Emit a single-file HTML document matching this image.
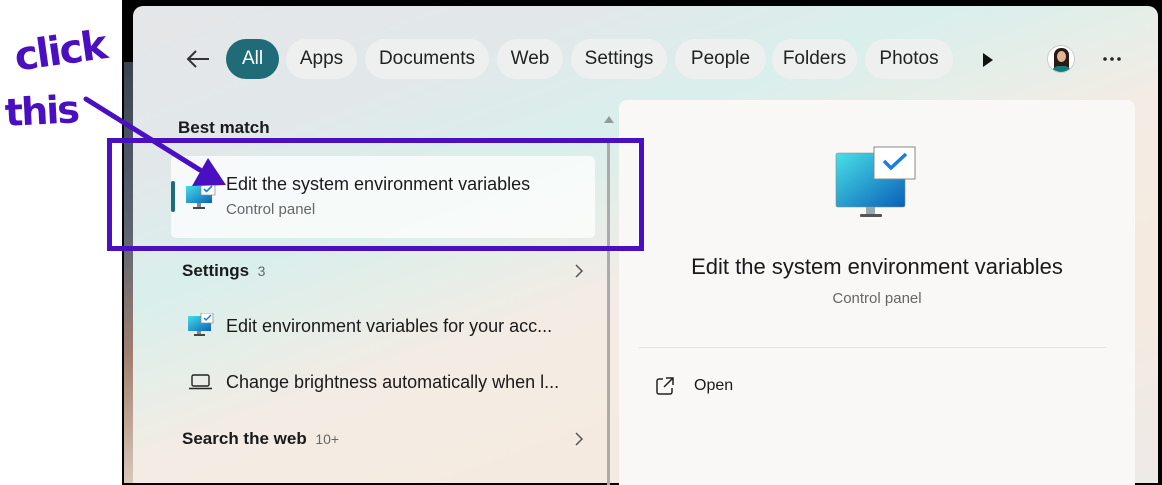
<!DOCTYPE html>
<html><head><meta charset="utf-8">
<style>
*{margin:0;padding:0;box-sizing:border-box}
body{width:1162px;height:485px;background:#fff;position:relative;overflow:hidden;font-family:"Liberation Sans",sans-serif;color:#1a1a1a}
.frame{position:absolute;left:122px;top:0;width:1040px;height:485px;background:#000}
.photo{position:absolute;left:124px;top:62px;width:12px;height:421px;background:linear-gradient(180deg,#3a4450 0%,#5b6470 40%,#a08070 70%,#d8c8b8 100%)}
.win{position:absolute;left:133px;top:6px;width:1025px;height:477px;border-radius:10px 10px 0 0;
background:linear-gradient(160deg,#e4e6e8 0%,#e2e8ea 20%,#d9efec 35%,#f4ece4 55%,#f5eadf 75%,#eeeae8 100%)}
.pill{position:absolute;top:39px;height:40px;border-radius:20px;background:#eef0f0;font-size:19px;line-height:40px;text-align:center;color:#222}
.all{background:#1f6b77;color:#fff}
.rp{position:absolute;left:619px;top:100px;width:516px;height:385px;background:#f9f8f7;border-radius:8px 8px 0 0}
.t{position:absolute;white-space:nowrap}
.hw{position:absolute;color:#4a0fc0;font-weight:bold;font-family:"DejaVu Sans",sans-serif;letter-spacing:-2px;line-height:1}
</style></head><body>
<div class="frame"></div>
<div class="photo"></div>
<div class="win"></div>

<svg style="position:absolute;left:185px;top:48px" width="26" height="22"><path d="M24 11H3M11 3L3 11L11 19" stroke="#333" stroke-width="2" fill="none"/></svg>
<div class="pill all" style="left:226px;width:53px">All</div>
<div class="pill" style="left:286px;width:71px">Apps</div>
<div class="pill" style="left:365px;width:124px">Documents</div>
<div class="pill" style="left:497px;width:66px">Web</div>
<div class="pill" style="left:571px;width:96px">Settings</div>
<div class="pill" style="left:675px;width:91px">People</div>
<div class="pill" style="left:772px;width:85px">Folders</div>
<div class="pill" style="left:865px;width:88px">Photos</div>
<svg style="position:absolute;left:982px;top:52px" width="12" height="16"><path d="M1 1L11 8L1 15Z" fill="#111"/></svg>
<div style="position:absolute;left:1047px;top:45px;width:28px;height:28px;border-radius:50%;background:#fff;border:1px solid #ccc;overflow:hidden">
<div style="position:absolute;left:6px;top:2px;width:15px;height:22px;border-radius:7px 7px 2px 2px;background:#2a1a12"></div>
<div style="position:absolute;left:9px;top:5px;width:9px;height:11px;border-radius:50%;background:#e2b598"></div>
<div style="position:absolute;left:3px;top:20px;width:21px;height:10px;border-radius:8px 8px 0 0;background:#147a80"></div></div>
<svg style="position:absolute;left:1102px;top:56px" width="20" height="6"><circle cx="3" cy="3" r="1.8" fill="#222"/><circle cx="10" cy="3" r="1.8" fill="#222"/><circle cx="17" cy="3" r="1.8" fill="#222"/></svg>

<div class="t" style="left:178px;top:118px;font-size:17px;font-weight:bold;color:#1a1a1a">Best match</div>
<div style="position:absolute;left:171px;top:156px;width:424px;height:82px;background:rgba(255,255,255,.75);border-radius:5px"></div>
<div style="position:absolute;left:171px;top:181px;width:4px;height:31px;background:#1f6b77;border-radius:2px"></div>
<svg style="position:absolute;left:185px;top:183px" width="32" height="28"><defs><linearGradient id="g1" x1="0" y1="0" x2="1" y2="1"><stop offset="0" stop-color="#45dde8"/><stop offset="1" stop-color="#0a63b8"/></linearGradient></defs>
<rect x="1" y="3" width="26" height="17" fill="url(#g1)"/><rect x="16" y="0" width="14" height="12" fill="#fff" stroke="#888" stroke-width=".7"/><path d="M19 6l2.5 2.5L27 3" stroke="#1a7de0" stroke-width="1.6" fill="none"/><rect x="12" y="20" width="4" height="4" fill="#888"/><rect x="8" y="24" width="12" height="2" fill="#444"/></svg>
<div class="t" style="left:226px;top:174px;font-size:18px">Edit the system environment variables</div>
<div class="t" style="left:226px;top:201px;font-size:15px;color:#666">Control panel</div>

<div class="t" style="left:182px;top:261px;font-size:17px;font-weight:bold">Settings <span style="font-weight:normal;color:#666;font-size:14px">&nbsp;3</span></div>
<svg style="position:absolute;left:574px;top:264px" width="10" height="14"><path d="M2 1l6 6-6 6" stroke="#555" stroke-width="1.5" fill="none"/></svg>
<svg style="position:absolute;left:187px;top:313px" width="28" height="24"><defs><linearGradient id="g2" x1="0" y1="0" x2="1" y2="1"><stop offset="0" stop-color="#45dde8"/><stop offset="1" stop-color="#0a63b8"/></linearGradient></defs>
<rect x="1" y="3" width="23" height="15" fill="url(#g2)"/><rect x="14" y="0" width="12" height="10" fill="#fff" stroke="#888" stroke-width=".7"/><path d="M17 5l2 2 5-5" stroke="#1a7de0" stroke-width="1.4" fill="none"/><rect x="10" y="18" width="4" height="3" fill="#888"/><rect x="7" y="21" width="11" height="2" fill="#444"/></svg>
<div class="t" style="left:226px;top:316px;font-size:18px">Edit environment variables for your acc...</div>
<svg style="position:absolute;left:189px;top:374px" width="24" height="16"><rect x="3" y="1" width="17" height="11" rx="1.5" stroke="#222" stroke-width="1.4" fill="none"/><path d="M0 14.5h23" stroke="#222" stroke-width="1.6"/></svg>
<div class="t" style="left:226px;top:372px;font-size:18px">Change brightness automatically when l...</div>
<div class="t" style="left:182px;top:429px;font-size:17px;font-weight:bold">Search the web <span style="font-weight:normal;color:#666;font-size:14px">&nbsp;10+</span></div>
<svg style="position:absolute;left:574px;top:432px" width="10" height="14"><path d="M2 1l6 6-6 6" stroke="#555" stroke-width="1.5" fill="none"/></svg>

<svg style="position:absolute;left:603px;top:114px" width="12" height="10"><path d="M1 9L6 2L11 9Z" fill="#999"/></svg>
<div style="position:absolute;left:607px;top:140px;width:3px;height:345px;background:#aaa"></div>

<div class="rp"></div>
<svg style="position:absolute;left:835px;top:146px" width="82" height="74"><defs><linearGradient id="g3" x1="0" y1="0" x2="1" y2="1"><stop offset="0" stop-color="#48e0e8"/><stop offset="1" stop-color="#0a5fb8"/></linearGradient></defs>
<rect x="1" y="7" width="69" height="54" rx="2" fill="url(#g3)" stroke="#888" stroke-width=".6"/><rect x="39" y="1" width="41" height="32" fill="#fff" stroke="#888" stroke-width="1"/><path d="M49 15l7 7 15-14" stroke="#1a7de0" stroke-width="3.5" fill="none"/><rect x="31" y="61" width="9" height="7" fill="#9aa"/><rect x="25" y="68" width="22" height="3" rx="1" fill="#555"/></svg>
<div class="t" style="left:619px;width:516px;text-align:center;top:254px;font-size:22px">Edit the system environment variables</div>
<div class="t" style="left:619px;width:516px;text-align:center;top:290px;font-size:15px;color:#666">Control panel</div>
<div style="position:absolute;left:639px;top:347px;width:467px;height:1px;background:#e4e4e4"></div>
<svg style="position:absolute;left:656px;top:377px" width="18" height="18"><path d="M7 2H3a2 2 0 0 0-2 2v11a2 2 0 0 0 2 2h11a2 2 0 0 0 2-2v-4M10 1h7v7M17 1L8 10" stroke="#222" stroke-width="1.5" fill="none"/></svg>
<div class="t" style="left:694px;top:377px;font-size:16px">Open</div>

<div style="position:absolute;left:107px;top:138px;width:537px;height:113px;border:5px solid #4a0fc0"></div>
<svg style="position:absolute;left:0;top:0" width="260" height="200"><path d="M86 99L200 170" stroke="#4a0fc0" stroke-width="5" stroke-linecap="round"/><path d="M226 185L192 186L208 158Z" fill="#4a0fc0"/></svg>
<div class="hw" style="left:12px;top:38px;font-size:40px;transform:rotate(-8deg);transform-origin:left top">click</div>
<div class="hw" style="left:4px;top:94px;font-size:38px;transform:rotate(-3deg);transform-origin:left top">this</div>
</body></html>
